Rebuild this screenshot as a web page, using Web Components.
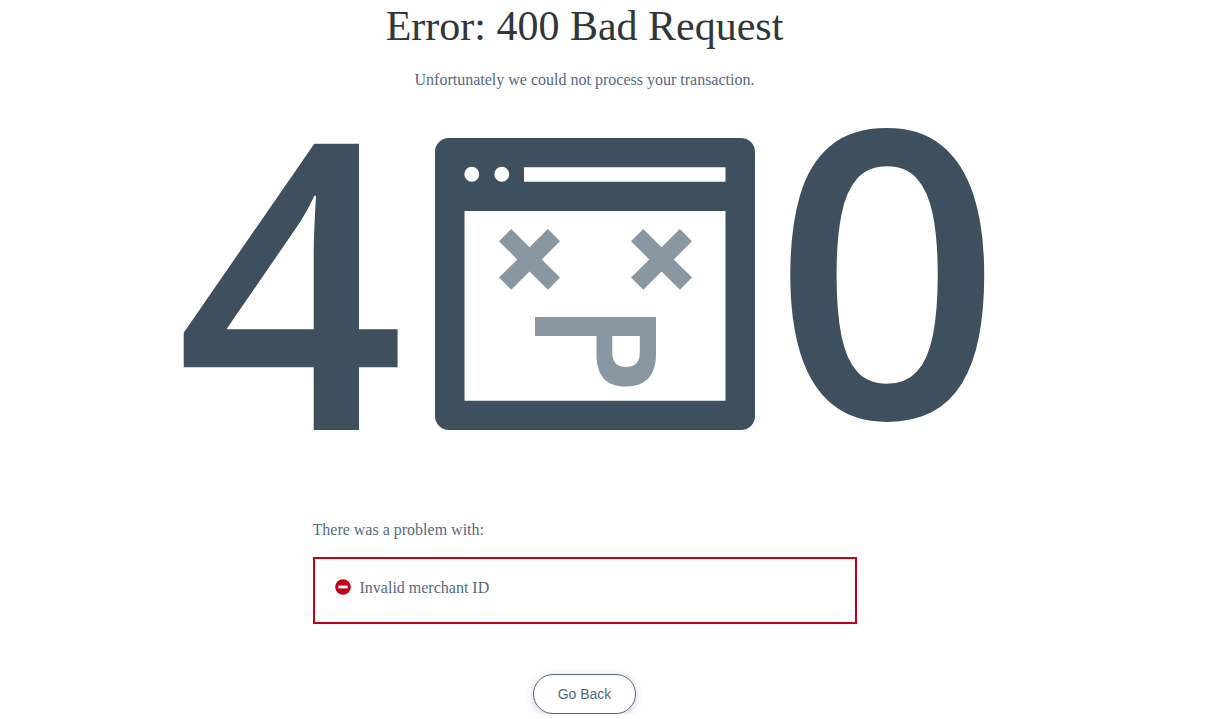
<!DOCTYPE html>
<html lang="en">
<head>
<meta charset="utf-8">
<meta name="viewport" content="width=device-width, initial-scale=1">
<title>Error: 400 Bad Request</title>
<style>
  body { margin: 0; background: #fff; color: #57697e; font: 16px/24px "Liberation Serif", "Times New Roman", serif; }
</style>
</head>
<body>
<error-page>
  <span slot="title">Error: 400 Bad Request</span>
  <span slot="message">Unfortunately we could not process your transaction.</span>
  <error-art slot="art"></error-art>
  <problem-list slot="problems" label="There was a problem with:">
    <problem-item>Invalid merchant ID</problem-item>
  </problem-list>
  <pill-button slot="action">Go Back</pill-button>
</error-page>

<template id="error-page">
  <style>
    :host { display: block; box-sizing: border-box; padding-right: 45px; overflow: hidden; }
    main { display: flex; flex-direction: column; align-items: center; }
    h1 { margin: 0; padding-top: 2px; font-size: 42px; line-height: 48px; font-weight: 400; color: #333638; text-align: center; }
    p { margin: 18px 0 0; text-align: center; }
    .art { width: 100%; margin-top: 28px; }
    .problems { width: 100%; max-width: 544px; margin-top: 78px; }
    .action { margin-top: 50px; }
  </style>
  <main>
    <h1><slot name="title"></slot></h1>
    <p><slot name="message"></slot></p>
    <div class="art"><slot name="art"></slot></div>
    <div class="problems"><slot name="problems"></slot></div>
    <div class="action"><slot name="action"></slot></div>
  </main>
</template>

<template id="error-art">
  <style>
    :host { display: block; }
    svg { display: block; width: 100%; max-width: 809px; margin: 0 auto; overflow: visible; }
    text { font: 600 400px "Open Sans", "Noto Sans", sans-serif; }
  </style>
  <svg viewBox="180 120 809 320" fill="#3e4f5d">
    <text x="176" y="430">4</text>
    <path fill-rule="evenodd" d="M449 138H741A14 14 0 0 1 755 152V416A14 14 0 0 1 741 430H449A14 14 0 0 1 435 416V152A14 14 0 0 1 449 138ZM464.5 211V400.7H725.5V211ZM524 167.3V181.7H725.5V167.3ZM464.3 174.2a7.5 7.5 0 1 0 15 0a7.5 7.5 0 1 0-15 0ZM494.3 174.2a7.5 7.5 0 1 0 15 0a7.5 7.5 0 1 0-15 0Z"/>
    <g fill="#8997a2">
      <path id="eye" d="M511.3 229L529.5 247.2L547.9 229L560 241.2L541.8 259.4L560 277.6L547.9 289.8L529.5 271.5L511.3 289.8L499 277.6L517.3 259.4L499 241.2Z"/>
      <use href="#eye" x="132"/>
      <path fill-rule="evenodd" d="M535 317H656V354C656 375 646 386.5 626 386.5C606 386.5 596.5 376 596.5 354V336H535ZM612.3 336V353C612.3 362 617 367 626 367C635 367 639.8 362 639.8 353V336Z"/>
    </g>
    <text x="773" y="418">0</text>
  </svg>
</template>

<template id="problem-list">
  <style>
    :host { display: block; }
    h2 { margin: 0 0 15px; font: inherit; }
    div { border: 2px solid #c40019; padding: 17px 20px 22px; }
  </style>
  <section aria-labelledby="label">
    <h2 id="label"></h2>
    <div role="list"><slot></slot></div>
  </section>
</template>

<template id="problem-item">
  <style>
    :host { display: flex; align-items: flex-start; gap: 9px; }
    svg { flex: none; width: 16px; height: 16px; margin-top: 3px; }
  </style>
  <svg viewBox="0 0 16 16" aria-hidden="true"><circle cx="8" cy="8" r="7.8" fill="#c40019"/><rect x="3.3" y="6.6" width="9.4" height="2.8" fill="#fff"/></svg>
  <span><slot></slot></span>
</template>

<template id="pill-button">
  <style>
    :host { display: block; }
    button { display: block; height: 40px; padding: 0 24px; border: 1px solid #57697e; border-radius: 20px; background: #fff; color: #57697e; font: 14px/20px "Liberation Sans", Arial, sans-serif; box-shadow: 0 2px 8px rgba(40, 50, 80, .2); cursor: pointer; }
  </style>
  <button type="button"><slot></slot></button>
</template>

<script>
  class TemplateElement extends HTMLElement {
    constructor() {
      super();
      const template = document.getElementById(this.localName);
      this.attachShadow({ mode: "open" }).append(template.content.cloneNode(true));
    }
  }
  customElements.define("error-page", class extends TemplateElement {});
  customElements.define("error-art", class extends TemplateElement {});
  customElements.define("problem-list", class extends TemplateElement {
    connectedCallback() {
      this.shadowRoot.getElementById("label").textContent = this.getAttribute("label");
    }
  });
  customElements.define("problem-item", class extends TemplateElement {
    connectedCallback() { this.setAttribute("role", "listitem"); }
  });
  customElements.define("pill-button", class extends TemplateElement {
    connectedCallback() {
      this.shadowRoot.querySelector("button").addEventListener("click", () => history.back());
    }
  });
</script>
</body>
</html>
